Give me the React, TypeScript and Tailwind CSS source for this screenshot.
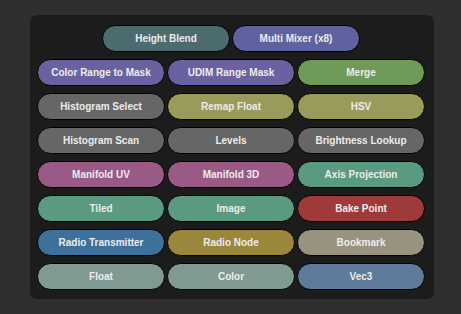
import React from "react";

type Node = { label: string; color: string };

const rows: Node[][] = [
  [
    { label: "Height Blend", color: "bg-[#4b6b6e]" },
    { label: "Multi Mixer (x8)", color: "bg-[#5e63a0]" },
  ],
  [
    { label: "Color Range to Mask", color: "bg-[#6a62a0]" },
    { label: "UDIM Range Mask", color: "bg-[#6a62a0]" },
    { label: "Merge", color: "bg-[#6f9a58]" },
  ],
  [
    { label: "Histogram Select", color: "bg-[#666666]" },
    { label: "Remap Float", color: "bg-[#9a9a5a]" },
    { label: "HSV", color: "bg-[#9a9a5a]" },
  ],
  [
    { label: "Histogram Scan", color: "bg-[#666666]" },
    { label: "Levels", color: "bg-[#666666]" },
    { label: "Brightness Lookup", color: "bg-[#666666]" },
  ],
  [
    { label: "Manifold UV", color: "bg-[#9a5a86]" },
    { label: "Manifold 3D", color: "bg-[#9a5a86]" },
    { label: "Axis Projection", color: "bg-[#5a9a80]" },
  ],
  [
    { label: "Tiled", color: "bg-[#5a9a80]" },
    { label: "Image", color: "bg-[#5a9a80]" },
    { label: "Bake Point", color: "bg-[#9e3a3a]" },
  ],
  [
    { label: "Radio Transmitter", color: "bg-[#3e709c]" },
    { label: "Radio Node", color: "bg-[#9a873c]" },
    { label: "Bookmark", color: "bg-[#9a9280]" },
  ],
  [
    { label: "Float", color: "bg-[#809a92]" },
    { label: "Color", color: "bg-[#809a92]" },
    { label: "Vec3", color: "bg-[#5f7a9a]" },
  ],
];

const NodeButton = ({ node }: { node: Node }) => (
  <button
    className={`${node.color} w-[128px] h-[27px] rounded-full border border-black text-[10px] font-bold text-[#ececec] flex items-center justify-center`}
    style={{ fontFamily: '"Liberation Sans", Arial, sans-serif' }}
  >
    {node.label}
  </button>
);

export default function App() {
  return (
    <div className="w-[461px] h-[314px] bg-[#2f2f2f] pt-[15px] pl-[30px]">
      <div className="w-[404px] h-[284px] bg-[#1c1c1c] rounded-[7px] pt-[10px] pl-[7px]">
        <div className="w-[388px] flex flex-col gap-[7px]">
          {rows.map((row, i) => (
            <div key={i} className="flex gap-[2px] justify-center">
              {row.map((n) => (
                <NodeButton key={n.label} node={n} />
              ))}
            </div>
          ))}
        </div>
      </div>
    </div>
  );
}
